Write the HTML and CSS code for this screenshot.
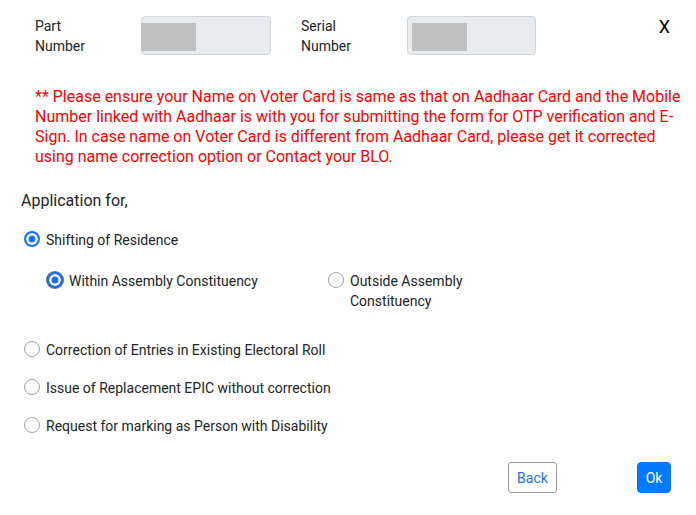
FILE: index.html
```html
<!DOCTYPE html>
<html>
<head>
<meta charset="utf-8">
<link rel="stylesheet" href="styles.css">
</head>
<body>
<div class="modal">
  <div class="header">
    <div class="field-label">Part<br>Number</div>
    <div class="fake-input first"><span class="blank"></span></div>
    <div class="field-label serial">Serial<br>Number</div>
    <div class="fake-input second"><span class="blank"></span></div>
    <div class="close">X</div>
  </div>

  <p class="notice">** Please ensure your Name on Voter Card is same as that on Aadhaar Card and the Mobile Number linked with Aadhaar is with you for submitting the form for OTP verification and E-Sign. In case name on Voter Card is different from Aadhaar Card, please get it corrected using name correction option or Contact your BLO.</p>

  <div class="apply-title">Application for,</div>

  <div class="options">
    <label class="opt opt-shift"><span class="radio checked"></span><span class="opt-text">Shifting of Residence</span></label>
    <div class="sub-options">
      <label class="opt sub-within"><span class="radio checked focus"></span><span class="opt-text">Within Assembly Constituency</span></label>
      <label class="opt sub-outside"><span class="radio"></span><span class="opt-text">Outside Assembly Constituency</span></label>
    </div>
    <label class="opt opt-correct"><span class="radio"></span><span class="opt-text">Correction of Entries in Existing Electoral Roll</span></label>
    <label class="opt opt-gap"><span class="radio"></span><span class="opt-text">Issue of Replacement EPIC without correction</span></label>
    <label class="opt opt-gap"><span class="radio"></span><span class="opt-text">Request for marking as Person with Disability</span></label>
  </div>

  <div class="actions">
    <button class="btn btn-back">Back</button>
    <button class="btn btn-ok">Ok</button>
  </div>
</div>
</body>
</html>
```

FILE: styles.css
```css
* { box-sizing: border-box; }
html, body { margin: 0; padding: 0; background: #fff; }
body {
  font-family: Roboto, "Liberation Sans", Arial, sans-serif;
  color: #212529;
  width: 696px;
}
.modal { padding: 0; }

.header {
  display: flex;
  align-items: flex-start;
  padding: 16px 25px 0 35px;
}
.field-label {
  width: 106px;
  font-size: 14px;
  line-height: 20px;
  color: #212529;
}
.field-label.serial { margin-left: 30px; }
.fake-input {
  height: 39px;
  background: #e9ecef;
  border: 1px solid #ced4da;
  border-radius: 4px;
  display: flex;
  align-items: flex-start;
  padding-top: 6px;
}
.fake-input.first { width: 130px; }
.fake-input.second { width: 129px; padding-left: 4px; }
.fake-input.first .blank { margin-left: -1px; }
.blank {
  display: block;
  width: 55px;
  height: 28px;
  background: #c0c0c0;
}
.close {
  margin-left: auto;
  font-size: 18px;
  line-height: 21px;
  color: #000;
  padding-right: 1px;
}

.notice {
  margin: 31px 0 0 35px;
  width: 652px;
  font-size: 16px;
  line-height: 20px;
  color: #ff0000;
}

.apply-title {
  margin: 24px 0 0 21px;
  font-size: 16px;
  line-height: 20px;
  color: #212529;
}

.options {
  padding-left: 24px;
  font-size: 14px;
  line-height: 20px;
  color: #212529;
}
.opt {
  display: flex;
  align-items: flex-start;
}
.opt-shift { margin-top: 19px; }
.opt-correct { margin-top: 29px; }
.opt-gap { margin-top: 18px; }
.radio {
  flex: none;
  width: 16px;
  height: 16px;
  margin-top: 1px;
  margin-right: 6px;
  border-radius: 50%;
  border: 1.5px solid #a2a2a2;
  background: #fff;
}
.radio.checked {
  border: 2px solid #1a73e8;
  background: #1a73e8;
  box-shadow: inset 0 0 0 2.5px #fff;
}
.radio.focus {
  box-shadow: inset 0 0 0 2.5px #fff, 0 0 0 1px #5b6f8c;
}
.sub-options {
  display: flex;
  align-items: flex-start;
  margin-top: 21px;
  padding-left: 23px;
}
.sub-within { width: 281px; }
.sub-outside .opt-text { width: 125px; }

.actions {
  display: flex;
  justify-content: flex-end;
  gap: 80px;
  margin-top: 26px;
  padding-right: 25px;
}
.btn {
  font-family: Roboto, "Liberation Sans", Arial, sans-serif;
  font-size: 14px;
  line-height: 20px;
  height: 31px;
  border-radius: 3px;
  cursor: pointer;
}
.btn-back {
  width: 49px;
  padding: 0;
  background: #fff;
  color: #1a73e8;
  border: 1px solid #9a9a9a;
}
.btn-ok {
  width: 34px;
  padding: 0;
  background: #007bff;
  color: #fff;
  border: 1px solid #007bff;
  border-radius: 4px;
}
```
